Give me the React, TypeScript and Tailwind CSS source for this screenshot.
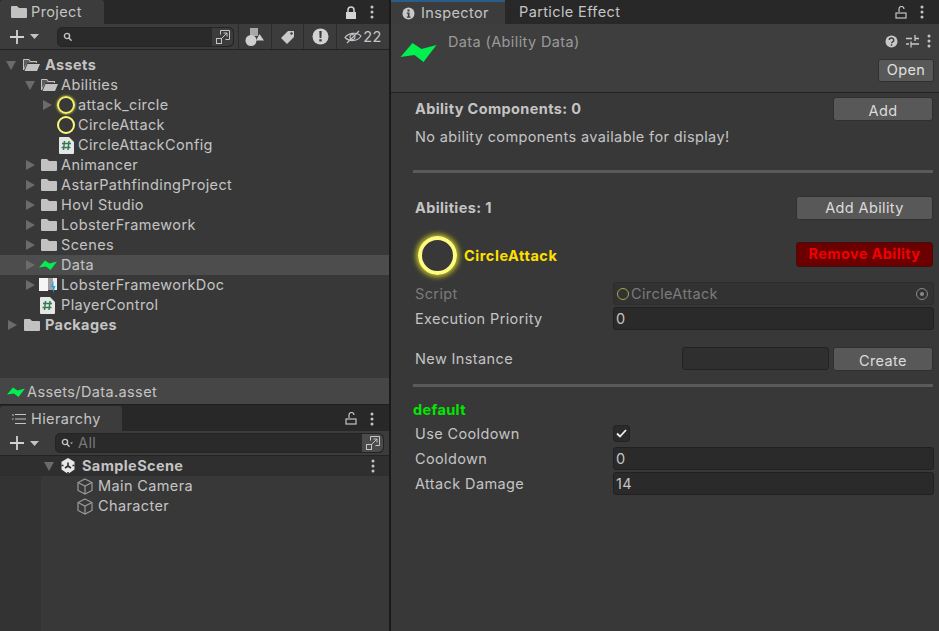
import React from 'react';

const Caret = ({ open }: { open?: boolean }) => (
  <svg width="10" height="10" viewBox="0 0 10 10" className="shrink-0">
    {open ? <path d="M0 1h10L5 10z" fill="#6b6b6b" /> : <path d="M1 0l9 5-9 5z" fill="#6b6b6b" />}
  </svg>
);

const FolderClosed = () => (
  <svg width="16" height="14" viewBox="0 0 16 14" className="shrink-0">
    <path d="M0 2a1 1 0 0 1 1-1h5l2 2h7a1 1 0 0 1 1 1v8a1 1 0 0 1-1 1H1a1 1 0 0 1-1-1z" fill="#c2c2c2" />
  </svg>
);

const FolderOpen = () => (
  <svg width="17" height="14" viewBox="0 0 17 14" className="shrink-0">
    <path d="M0 2a1 1 0 0 1 1-1h5l1.500 2H14v2H4L1 12H0z" fill="#c2c2c2" />
    <path d="M4.500 6H17l-3 7H1.500z" fill="#c2c2c2" />
    <path d="M1 2h4.500l1.500 2h6v1H4L1 10z" fill="#383838" opacity="0.75" />
  </svg>
);

const Bolt = ({ w = 18, h = 10 }: { w?: number; h?: number }) => (
  <svg width={w} height={h} viewBox="0 0 36 20" className="shrink-0">
    <path d="M0 15L12 1l9 6 15-4-13 17-9-7z" fill="#00f050" />
  </svg>
);

const Ring = ({ size = 18, border = 'border-2 border-[#f4f26a]', glow = 'shadow-[0_0_2px_1px_#8c8c30]' }: { size?: number; border?: string; glow?: string }) => (
  <span className={`block shrink-0 rounded-full ${border} ${glow}`} style={{ width: size, height: size }} />
);

const ScriptIcon = () => (
  <svg width="15" height="17" viewBox="0 0 15 17" className="shrink-0">
    <path d="M0 1a1 1 0 0 1 1-1h9l5 5v11a1 1 0 0 1-1 1H1a1 1 0 0 1-1-1z" fill="#e6e6e6" />
    <path d="M5.500 4l-1 9M10 4l-1 9M3 6.500h9M2.500 10.500h9" stroke="#2f7d4f" strokeWidth="1.500" fill="none" />
  </svg>
);

const BookIcon = () => (
  <svg width="18" height="17" viewBox="0 0 18 17" className="shrink-0">
    <path d="M0 1h9v13H0z" fill="#f6f6f6" />
    <path d="M9 1h5v12H9z" fill="#a0a0a0" />
    <path d="M14 1h4v12h-4z" fill="#eeeeee" />
    <path d="M14.500 4l-2.500 6h2v6l2.500-7h-2z" fill="#1fa6e0" />
  </svg>
);

const Cube = () => (
  <svg width="16" height="17" viewBox="0 0 16 17" className="shrink-0" fill="none" stroke="#9a9a9a" strokeWidth="1.200">
    <path d="M8 1l7 3.500v8L8 16l-7-3.500v-8z" />
    <path d="M1 4.500L8 8l7-3.500M8 8v8" />
  </svg>
);

const UnityIcon = () => (
  <svg width="16" height="16" viewBox="0 0 16 16" className="shrink-0">
    <path d="M8 0l6.500 3.800v7.800L8 16l-6.500-4.400V3.800z" fill="#e8e8e8" />
    <path d="M8 4.500V8M8 8l-3 2M8 8l3 2M1.500 7.500h2M14.500 7.500h-2M8 16v-2" stroke="#2b2b2b" strokeWidth="1.600" fill="none" />
  </svg>
);

const Dots = () => (
  <svg width="4" height="14" viewBox="0 0 4 14" className="shrink-0">
    <circle cx="2" cy="2" r="1.500" fill="#c4c4c4" />
    <circle cx="2" cy="7" r="1.500" fill="#c4c4c4" />
    <circle cx="2" cy="12" r="1.500" fill="#c4c4c4" />
  </svg>
);

const LockClosed = () => (
  <svg width="12" height="13" viewBox="0 0 12 13" className="shrink-0">
    <path d="M3 6V4a3 3 0 0 1 6 0v2" stroke="#d4d4d4" strokeWidth="1.500" fill="none" />
    <rect x="1" y="6" width="10" height="7" fill="#d4d4d4" />
  </svg>
);

const LockOpen = () => (
  <svg width="12" height="13" viewBox="0 0 12 13" className="shrink-0" fill="none" stroke="#c4c4c4" strokeWidth="1.200">
    <path d="M4 6V3a2.500 2.500 0 0 1 5 0" />
    <rect x="1" y="7" width="10" height="5" />
  </svg>
);

const Plus = () => (
  <svg width="14" height="14" viewBox="0 0 14 14" className="shrink-0">
    <path d="M7 0v14M0 7h14" stroke="#d2d2d2" strokeWidth="1.800" />
  </svg>
);

const MiniCaret = () => (
  <svg width="9" height="5" viewBox="0 0 9 5" className="shrink-0">
    <path d="M0 0h9L4.500 5z" fill="#c4c4c4" />
  </svg>
);

const Magnifier = ({ drop }: { drop?: boolean }) => (
  <svg width="12" height="10" viewBox="0 0 12 10" className="shrink-0" fill="none" stroke="#c4c4c4" strokeWidth="1.400">
    <circle cx="4" cy="4" r="2.600" />
    <path d="M6 6l2.500 2.800" />
    {drop && <path d="M9 4.500h3l-1.500 1.500z" fill="#c4c4c4" stroke="none" />}
  </svg>
);

const Expand = () => (
  <svg width="16" height="16" viewBox="0 0 16 16" className="shrink-0" fill="none" stroke="#c4c4c4" strokeWidth="1">
    <path d="M5.500 5.500V1.500h9v9h-4" />
    <rect x="1.500" y="9.500" width="5" height="5" />
    <path d="M7 9l5-5M8.500 4H12v3.500" />
  </svg>
);

const Row = ({ indent, children, bold, selected, pad }: { indent: string; children: React.ReactNode; bold?: boolean; selected?: boolean; pad?: string }) => (
  <div className={`flex h-5 items-center ${indent} ${selected ? 'bg-[#4d4d4d]' : ''} ${bold ? 'font-bold' : ''} ${pad ?? ''}`}>{children}</div>
);

const Caption = ({ children, muted }: { children: React.ReactNode; muted?: boolean }) => (
  <span className={`w-[198px] shrink-0 ${muted ? 'text-[#7b7b7b]' : ''}`}>{children}</span>
);

const Field = ({ children }: { children?: React.ReactNode }) => (
  <div className="-mr-[1px] flex h-[23px] flex-1 items-center rounded-[3px] border border-[#212121] bg-[#2a2a2a] px-[2px] text-[#c4c4c4]">{children}</div>
);

const Btn = ({ children, className }: { children: React.ReactNode; className: string }) => (
  <div className={`flex items-center justify-center rounded-[3px] border border-[#303030] bg-[#585858] text-[#dcdcdc] ${className}`}>{children}</div>
);

const Separator = () => <div className="h-[3px] bg-[#5a5a5a]" />;

const projectTree = (
  <div className="h-[328px] shrink-0 pt-[5px]">
    <Row indent="pl-[6px]" bold>
      <Caret open />
      <span className="ml-[7px] mr-[5px] flex"><FolderOpen /></span>
      Assets
    </Row>
    <Row indent="pl-[25px]">
      <Caret open />
      <span className="ml-[6px] mr-[3px] flex"><FolderOpen /></span>
      Abilities
    </Row>
    <Row indent="pl-[42px]">
      <Caret />
      <span className="ml-[5px] mr-[3px] flex"><Ring /></span>
      attack_circle
    </Row>
    <Row indent="pl-[57px]">
      <span className="mr-[3px] flex"><Ring border="border-2 border-[#fbfa78]" glow="" /></span>
      CircleAttack
    </Row>
    <Row indent="pl-[59px]">
      <span className="mr-[4px] flex"><ScriptIcon /></span>
      CircleAttackConfig
    </Row>
    {['Animancer', 'AstarPathfindingProject', 'Hovl Studio', 'LobsterFramework', 'Scenes'].map(name => (
      <Row key={name} indent="pl-[25px]">
        <Caret />
        <span className="ml-[6px] mr-[4px] flex"><FolderClosed /></span>
        {name}
      </Row>
    ))}
    <Row indent="pl-[25px]" selected>
      <Caret />
      <span className="ml-[4px] mr-[4px] flex"><Bolt /></span>
      Data
    </Row>
    <Row indent="pl-[25px]">
      <Caret />
      <span className="ml-[4px] mr-[4px] flex"><BookIcon /></span>
      LobsterFrameworkDoc
    </Row>
    <Row indent="pl-[40px]">
      <span className="mr-[6px] flex"><ScriptIcon /></span>
      PlayerControl
    </Row>
    <Row indent="pl-[7px]" bold>
      <Caret />
      <span className="ml-[7px] mr-[5px] flex"><FolderClosed /></span>
      Packages
    </Row>
  </div>
);

const App: React.FC = () => {
  return (
    <div className="flex h-[631px] w-[939px] overflow-hidden bg-[#383838] font-['Inter',sans-serif] text-[14.500px] tracking-[0.38px] text-[#c4c4c4]">
      <div className="flex w-[389px] shrink-0 flex-col">
        <div className="flex h-[24px] shrink-0 items-end justify-between bg-[#282828] pr-[15px]">
          <div className="flex h-[24px] w-[104px] items-center gap-[4px] rounded-t-[3px] bg-[#3c3c3c] pl-[11px] pr-2">
            <FolderClosed />
            Project
          </div>
          <div className="flex h-[24px] items-center gap-[13px]">
            <LockClosed />
            <Dots />
          </div>
        </div>
        <div className="flex h-[26px] shrink-0 items-center border-b border-[#232323] bg-[#3c3c3c]">
          <div className="flex w-[57px] items-center gap-[6px] pl-[10px]">
            <Plus />
            <MiniCaret />
          </div>
          <div className="flex h-[20px] w-[177px] items-center rounded-[5px] border border-[#242424] bg-[#2a2a2a] pl-[5px]">
            <Magnifier />
            <span className="flex-1" />
            <div className="flex h-full w-[21px] items-center justify-center rounded-r-[5px] bg-[#3c3c3c]"><Expand /></div>
          </div>
          <div className="ml-[4px] flex h-full w-[33px] items-center justify-center border-l border-[#2c2c2c]">
            <svg width="20" height="18" viewBox="0 0 20 18">
              <rect x="5" y="0" width="8" height="8" fill="#a8a8a8" />
              <circle cx="6" cy="12.500" r="5.500" fill="#cfcfcf" />
              <path d="M14.500 6l4.500 6.500h-8z" fill="#cfcfcf" />
            </svg>
          </div>
          <div className="flex h-full w-[32px] items-center justify-center border-l border-[#2c2c2c]">
            <svg width="14" height="14" viewBox="0 0 14 14">
              <path d="M7 1h6v6l-7 7-6-6z" fill="#c9c9c9" />
              <circle cx="10.500" cy="3.500" r="1.200" fill="#3c3c3c" />
            </svg>
          </div>
          <div className="flex h-full w-[33px] items-center justify-center border-l border-[#2c2c2c]">
            <svg width="17" height="17" viewBox="0 0 17 17">
              <circle cx="8.500" cy="8.500" r="8" fill="#d2d2d2" />
              <path d="M7.300 3h2.400l-.3 7H7.600zM7.300 11.300h2.400v2.300H7.300z" fill="#3c3c3c" />
            </svg>
          </div>
          <div className="flex h-full flex-1 items-center justify-center gap-[1px] border-l border-[#2c2c2c]">
            <svg width="18" height="14" viewBox="0 0 18 14" fill="none" stroke="#c4c4c4" strokeWidth="1.100">
              <path d="M1 7.500C4 3 13 1.500 17 6c-3 5-11 6.500-16 1.500z" />
              <circle cx="8.500" cy="7" r="2.500" />
              <path d="M3 13L15 1" />
            </svg>
            22
          </div>
        </div>
        {projectTree}
        <div className="flex h-[26px] shrink-0 items-center gap-[2px] bg-[#464646] pl-[7px] pt-[1px]">
          <Bolt />
          Assets/Data.asset
        </div>
        <div className="h-[1px] shrink-0 bg-[#1f1f1f]" />
        <div className="flex h-[26px] shrink-0 items-end justify-between bg-[#282828] pr-[15px]">
          <div className="flex h-[25px] w-[122px] items-center gap-[5px] rounded-t-[3px] bg-[#3c3c3c] pl-[12px]">
            <svg width="14" height="12" viewBox="0 0 14 12" stroke="#c4c4c4" strokeWidth="1.200" fill="none">
              <path d="M0 2h2M3 1.500h11M3 6h11M3 10.500h11M0 6h1.500" />
            </svg>
            Hierarchy
          </div>
          <div className="flex h-[25px] items-center gap-[13px]">
            <LockOpen />
            <Dots />
          </div>
        </div>
        <div className="flex h-[25px] shrink-0 items-center border-b border-[#232323] bg-[#3c3c3c]">
          <div className="flex w-[55px] items-center gap-[6px] pl-[10px]">
            <Plus />
            <MiniCaret />
          </div>
          <div className="flex h-[20px] w-[329px] items-center rounded-[5px] border border-[#242424] bg-[#2a2a2a] pl-[5px] text-[#787878]">
            <Magnifier drop />
            <span className="ml-[5px] flex-1">All</span>
            <div className="flex h-full w-[21px] items-center justify-center rounded-r-[5px] bg-[#4b4b4b]"><Expand /></div>
          </div>
        </div>
        <div className="flex h-[20px] shrink-0 items-center justify-between border-b border-[#2d2d2d] bg-[#2f2f2f] pl-[44px] pr-[14px] font-bold">
          <div className="flex items-center gap-[6px]">
            <Caret open />
            <UnityIcon />
            SampleScene
          </div>
          <Dots />
        </div>
        <div className="flex flex-1">
          <div className="w-[41px] shrink-0 bg-[#333333]" />
          <div className="flex-1">
            <Row indent="pl-[36px]" pad="gap-[5px]"><Cube />Main Camera</Row>
            <Row indent="pl-[36px]" pad="gap-[5px]"><Cube />Character</Row>
          </div>
        </div>
      </div>

      <div className="w-[2px] shrink-0 bg-[#1a1a1a]" />

      <div className="flex min-w-0 flex-1 flex-col">
        <div className="flex h-[24px] shrink-0 items-center justify-between bg-[#282828] pr-[6px]">
          <div className="flex items-center">
            <div className="flex h-[24px] w-[114px] items-center gap-[6px] border-t-2 border-[#2c5d87] bg-[#3c3c3c] pl-[11px]">
              <svg width="13" height="13" viewBox="0 0 13 13">
                <circle cx="6.500" cy="6.500" r="6" fill="#c9c9c9" />
                <path d="M5.500 2.500h2v2h-2zM4.800 5.500h2.700v4h1v1.200H4.800V9.500h1v-2.800h-1z" fill="#3c3c3c" />
              </svg>
              Inspector
            </div>
            <span className="ml-[14px]">Particle Effect</span>
          </div>
          <div className="flex items-center gap-[13px] pr-[9px]">
            <LockOpen />
            <Dots />
          </div>
        </div>

        <div className="relative h-[69px] shrink-0 border-b border-[#232323] bg-[#3e3e3e] pl-[9px]">
          <div className="flex items-start">
            <div className="mt-[18px]"><Bolt w={37} h={20} /></div>
            <span className="ml-[11px] mt-[7px] text-[#9a9a9a]">Data (Ability Data)</span>
            <div className="ml-auto mt-[10px] flex items-center gap-[8px] pr-[8px]">
              <svg width="13" height="13" viewBox="0 0 13 13">
                <circle cx="6.500" cy="6.500" r="6" fill="#c9c9c9" />
                <path d="M4.200 5a2.300 2 0 1 1 3.400 1.800c-.7.400-1 .8-1 1.400M6.500 9.300v1.400" stroke="#3c3c3c" strokeWidth="1.400" fill="none" />
              </svg>
              <svg width="13" height="13" viewBox="0 0 13 13" stroke="#c9c9c9" strokeWidth="1.300" fill="none">
                <path d="M0 3.500h6M9 0v6M9 3.500h4M0 9h3M5 6.500v6M5 9h8" />
              </svg>
              <Dots />
            </div>
          </div>
          <Btn className="absolute right-[5px] top-[35px] h-[23px] w-[56px] pb-[1px] text-[#e0e0e0]">Open</Btn>
        </div>

        <div className="flex flex-col pl-[24px] pr-[6px]">
          <div className="mt-[4px] flex h-[24px] items-center justify-between">
            <span className="font-bold">Ability Components: 0</span>
            <Btn className="h-[24px] w-[100px] pt-[3px]">Add</Btn>
          </div>
          <div className="mt-[6px] flex h-[20px] items-center">No ability components available for display!</div>
          <div className="mt-[23px] -ml-[2px]"><Separator /></div>
          <div className="mt-[23px] flex h-[24px] items-center justify-between">
            <span className="font-bold">Abilities: 1</span>
            <Btn className="h-[24px] w-[137px]">Add Ability</Btn>
          </div>
          <div className="mt-[12px] flex h-[47px] items-center justify-between">
            <div className="flex items-center gap-[6px] pl-[3px] font-bold tracking-[0.55px] text-[#ffe000]">
              <Ring size={39} border="border-[4px] border-[#fdfc80]" glow="shadow-[0_0_5px_2px_#c0c020]" />
              <span className="mt-[1px] ml-[1px]">CircleAttack</span>
            </div>
            <Btn className="-mt-[3px] h-[25px] w-[137px] !border-[#3c1010] !bg-[#6c0000] font-bold !text-[#f00000]">Remove Ability</Btn>
          </div>
          <div className="mt-[3px] flex h-[23px] items-center">
            <Caption muted>Script</Caption>
            <div className="-mr-[1px] flex h-[23px] flex-1 items-center rounded-[3px] border border-[#2d2d2d] bg-[#323232] pl-[3px] pr-[5px] text-[#7b7b7b]">
              <Ring size={12} border="border-[1.500px] border-[#a8a84c]" glow="" />
              <span className="ml-[2px] flex-1">CircleAttack</span>
              <span className="flex size-[12px] items-center justify-center rounded-full border border-[#8a8a8a]">
                <span className="size-[4px] rounded-full bg-[#8a8a8a]" />
              </span>
            </div>
          </div>
          <div className="mt-[2px] flex h-[23px] items-center">
            <Caption>Execution Priority</Caption>
            <Field>0</Field>
          </div>
          <div className="mt-[17px] flex h-[24px] items-center">
            <Caption>New Instance</Caption>
            <div className="ml-[69px] mb-[1px] h-[23px] w-[147px] rounded-[3px] border border-[#232323] bg-[#2f2f2f]" />
            <Btn className="ml-[4px] h-[24px] flex-1 pt-[3px]">Create</Btn>
          </div>
          <div className="mt-[13px] -ml-[2px]"><Separator /></div>
          <div className="-ml-[2px] mt-[13px] flex h-[20px] items-center font-bold text-[#00e800]">default</div>
          <div className="mt-[2px] flex h-[23px] items-center">
            <Caption>Use Cooldown</Caption>
            <div className="flex size-[17px] items-center justify-center rounded-[3px] border border-[#232323] bg-[#2a2a2a]">
              <svg width="11" height="9" viewBox="0 0 11 9" fill="none" stroke="#f0f0f0" strokeWidth="1.800">
                <path d="M1 4.500l3 3 6-6.500" />
              </svg>
            </div>
          </div>
          <div className="mt-[2px] flex h-[23px] items-center">
            <Caption>Cooldown</Caption>
            <Field>0</Field>
          </div>
          <div className="mt-[2px] flex h-[23px] items-center">
            <Caption>Attack Damage</Caption>
            <Field>14</Field>
          </div>
        </div>
      </div>
    </div>
  );
};

export default App;
